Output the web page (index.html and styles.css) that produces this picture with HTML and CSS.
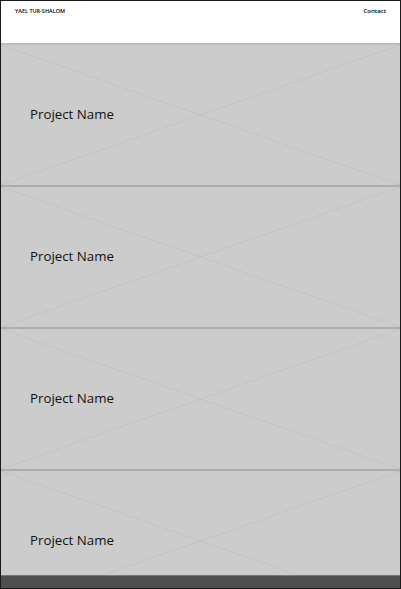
FILE: index.html
```html
<html>
<head>
    <title>Yael Tur-Shalom</title>
    <link rel="stylesheet" href="styles.css">
</head>
<body>
    <div id="header">
        <div id="logo">YAEL TUR-SHALOM</div>
        <div id="contact">Contact</div>
    </div>
    <div id="main">
        <div class="project"><span class="project-name">Project Name</span></div>
        <div class="project"><span class="project-name">Project Name</span></div>
        <div class="project"><span class="project-name">Project Name</span></div>
        <div class="project"><span class="project-name">Project Name</span></div>
    </div>
    <div id="footer"></div>
</body>
</html>
```
FILE: styles.css
```css
html {
    height: 100%;
}
body {
    height: 100%;
    margin: 0;
    box-sizing: border-box;
    border: 1px solid #1a1a1a;
    background-color: white;
    font-family: "Open Sans", sans-serif;
    display: flex;
    flex-direction: column;
    overflow: hidden;
}
#header {
    height: 42px;
    flex-shrink: 0;
    display: flex;
    justify-content: space-between;
    align-items: flex-start;
    padding: 6px 14px 0 14px;
    box-sizing: border-box;
    font-size: 5.5px;
    font-weight: 600;
    color: #000;
}
#contact {
    font-size: 6px;
}
#main {
    flex: 1;
    overflow: hidden;
}
.project {
    height: 140px;
    box-sizing: content-box;
    border-top: 2px solid #adadad;
    background-color: #cccccc;
    background-image:
        linear-gradient(to top right, transparent calc(50% - 0.6px), #bdbdbd 50%, transparent calc(50% + 0.6px)),
        linear-gradient(to bottom right, transparent calc(50% - 0.6px), #bdbdbd 50%, transparent calc(50% + 0.6px));
    display: flex;
    align-items: center;
    padding-left: 29px;
}
.project:first-child {
    border-top-color: #bdbdbd;
}
.project-name {
    font-size: 13.3px;
    color: #111;
    margin-bottom: 2px;
}
#footer {
    height: 12px;
    flex-shrink: 0;
    background-color: #4f4f4f;
    border-top: 1px solid #777;
}
```
